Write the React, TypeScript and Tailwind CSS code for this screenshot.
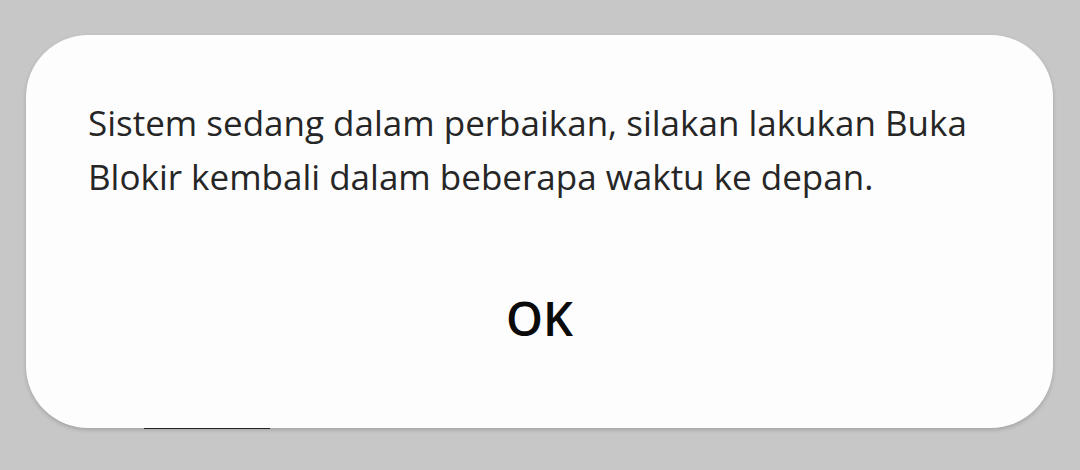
export default function App() {
  return (
    <div className="min-h-[470px] w-full overflow-hidden bg-[#c6c7c6] pt-[35px]" style={{ fontFamily: "'Open Sans', 'Noto Sans', sans-serif" }}>
      <div className="relative z-10 mx-[26px] flex h-[393px] w-[1027px] flex-col rounded-[62px] bg-[#fdfdfd] pl-[62px] pr-[50px] pt-[61px] shadow-[0_2px_4px_rgba(0,0,0,0.18)]">
        <p className="max-w-[910px] text-[35px] leading-[54px] text-[#262626]">
          Sistem sedang dalam perbaikan, silakan lakukan Buka Blokir kembali dalam beberapa waktu ke depan.
        </p>
        <button className="-ml-[62px] mr-[-50px] mt-[91px] text-center text-[47px] font-semibold leading-none text-[#0a0a0a]">
          OK
        </button>
      </div>
      <div className="-mt-[1px] ml-[144px] h-[2px] w-[126px] bg-[#2a2a2a]" />
    </div>
  );
}
